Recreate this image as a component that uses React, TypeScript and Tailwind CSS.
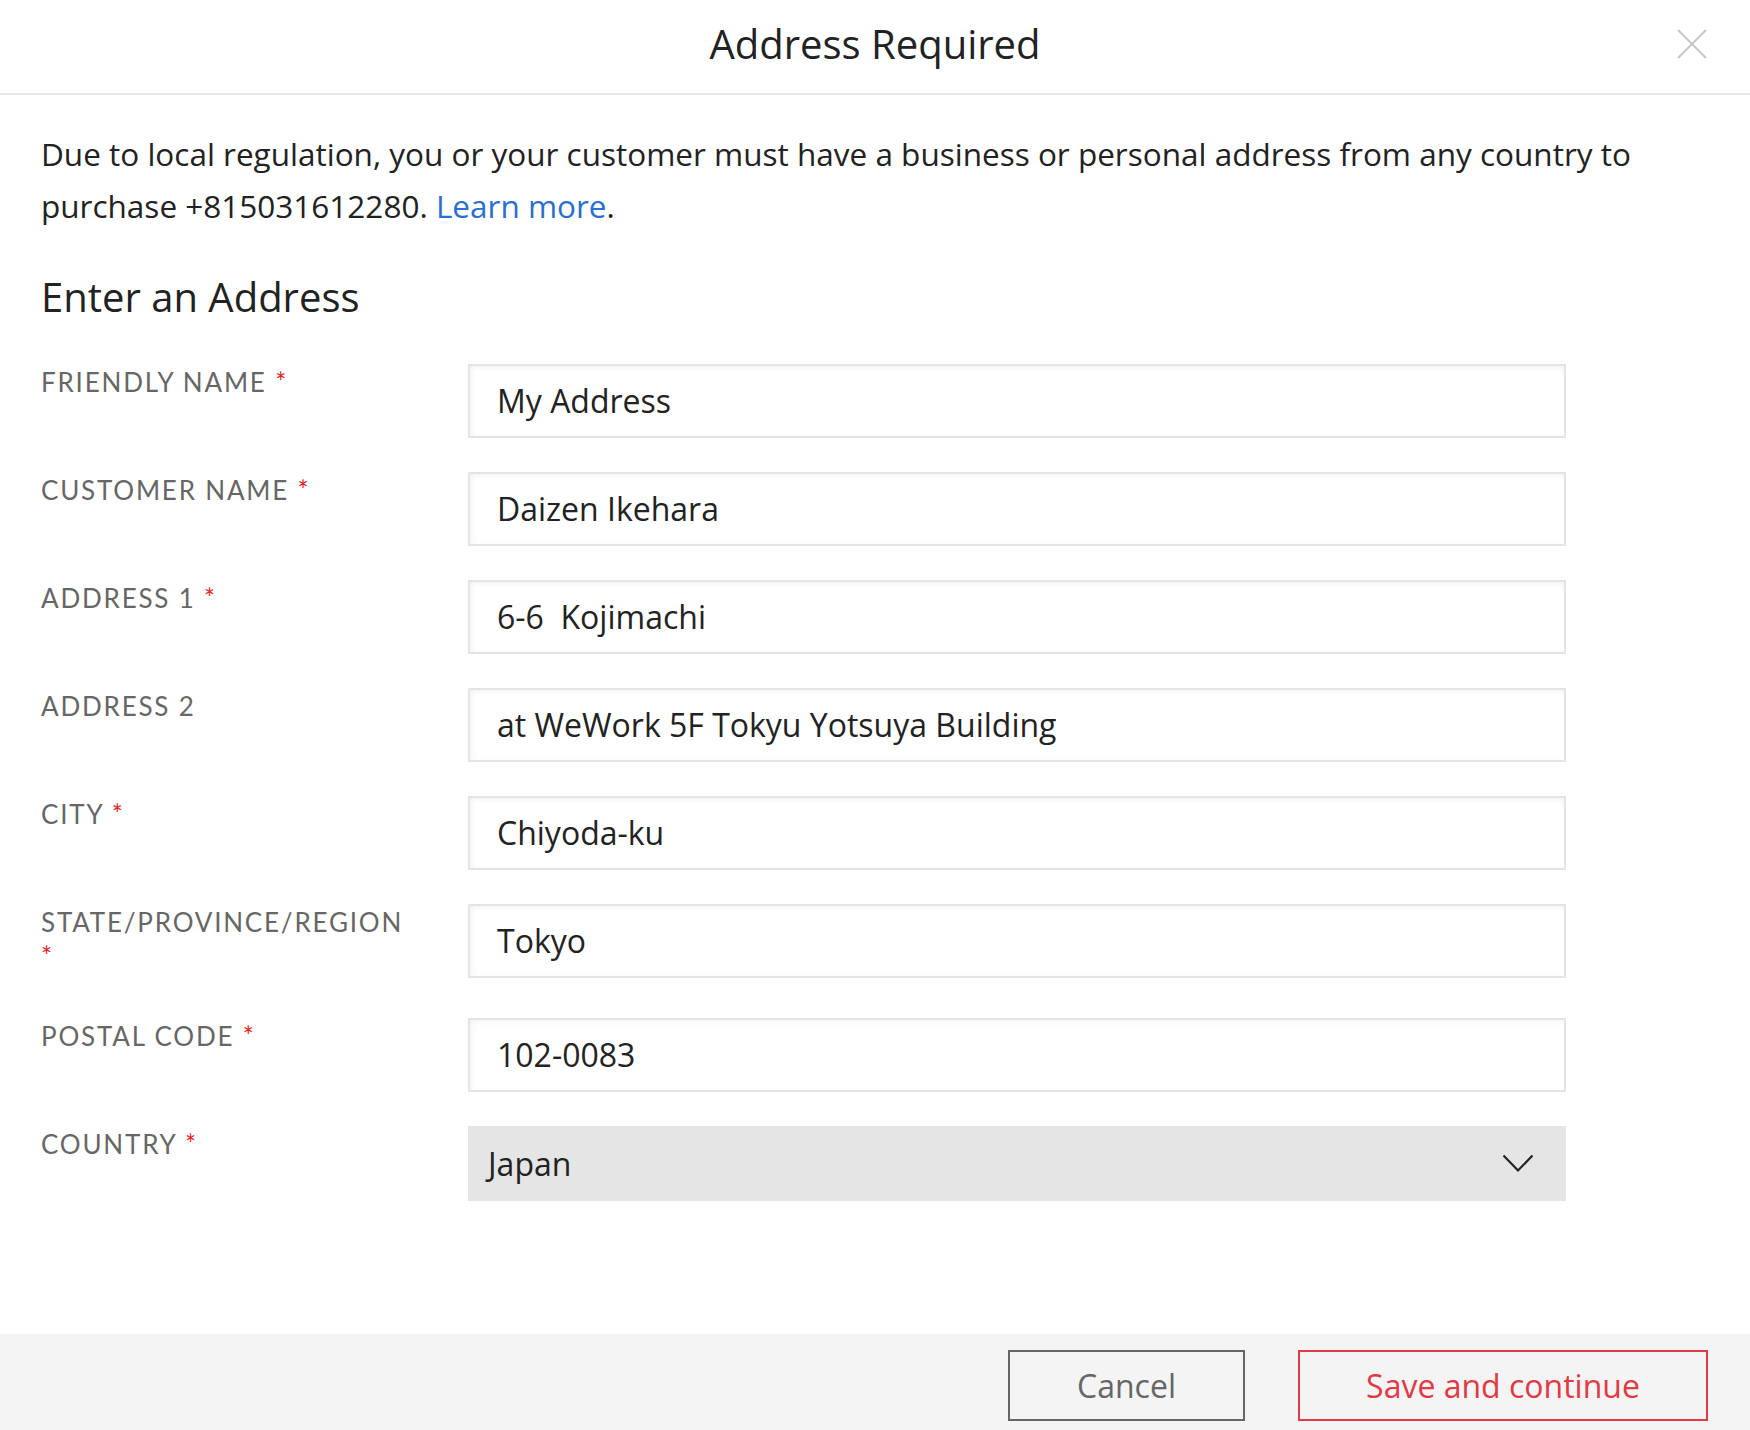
const fields = [
    { label: 'FRIENDLY NAME', required: true, value: 'My Address' },
    { label: 'CUSTOMER NAME', required: true, value: 'Daizen Ikehara' },
    { label: 'ADDRESS 1', required: true, value: '6-6  Kojimachi' },
    { label: 'ADDRESS 2', required: false, value: 'at WeWork 5F Tokyu Yotsuya Building' },
    { label: 'CITY', required: true, value: 'Chiyoda-ku' },
    { label: 'STATE/PROVINCE/REGION', required: true, value: 'Tokyo' },
    { label: 'POSTAL CODE', required: true, value: '102-0083' },
]

function FieldLabel({ text, required }: { text: string; required: boolean }) {
    return (
        <div className="pt-[1px] pb-[45px] pr-[52px] font-['Lato',sans-serif] text-[26px] leading-[34px] tracking-[1.8px] text-[#666666]">
            {text}
            {required && <span className="text-[#e2231a]"> *</span>}
        </div>
    )
}

export default function App() {
    return (
        <div className="w-[1750px] h-[1430px] bg-white flex flex-col text-[#222222] font-['Open_Sans',sans-serif] overflow-hidden">
            {/* Header */}
            <header className="relative h-[95px] shrink-0 border-b-2 border-[#e6e6e6] flex items-center justify-center">
                <h1 className="text-[40px] leading-none -mt-[6px]">Address Required</h1>
                <button className="absolute right-[43px] top-[29px]">
                    <svg width="30" height="30" viewBox="0 0 30 30" fill="none">
                        <path d="M1 1 L29 29 M29 1 L1 29" stroke="#c8c8c8" strokeWidth="2" />
                    </svg>
                </button>
            </header>

            {/* Body */}
            <main className="flex-1 px-[41px]">
                <p className="mt-[33px] text-[31.5px] leading-[52px]">
                    Due to local regulation, you or your customer must have a business or personal address from any country to purchase +815031612280.{' '}
                    <a className="text-[#2a6fcf]">Learn more</a>.
                </p>

                <h2 className="mt-[43px] mb-[45px] text-[40px] leading-[44px]">Enter an Address</h2>

                <div className="grid grid-cols-[427px_1098px]">
                    {fields.map((f) => (
                        <div key={f.label} className="contents">
                            <FieldLabel text={f.label} required={f.required} />
                            <div className="mb-[34px]">
                                <div className="h-[74px] border-2 border-[#e4e4e4] bg-white shadow-[inset_2px_2px_5px_rgba(0,0,0,0.05)] flex items-center pl-[27px] text-[32px] whitespace-pre">
                                    {f.value}
                                </div>
                            </div>
                        </div>
                    ))}

                    <FieldLabel text="COUNTRY" required />
                    <div className="h-[75px] bg-[#e5e5e5] flex items-center justify-between pl-[20px] pr-[32px] text-[32px]">
                        <span>Japan</span>
                        <svg width="32" height="19" viewBox="0 0 32 19" fill="none">
                            <path d="M1.5 1.5 L16 16.5 L30.5 1.5" stroke="#222" strokeWidth="2.2" />
                        </svg>
                    </div>
                </div>
            </main>

            {/* Footer */}
            <footer className="h-[96px] shrink-0 bg-[#f4f4f4] flex items-start justify-end gap-[53px] pt-[16px] pr-[42px]">
                <button className="w-[237px] h-[71px] border-2 border-[#666666] text-[#666666] text-[32px]">Cancel</button>
                <button className="w-[410px] h-[71px] border-2 border-[#e03a46] text-[#e03a46] text-[32px]">Save and continue</button>
            </footer>
        </div>
    )
}
